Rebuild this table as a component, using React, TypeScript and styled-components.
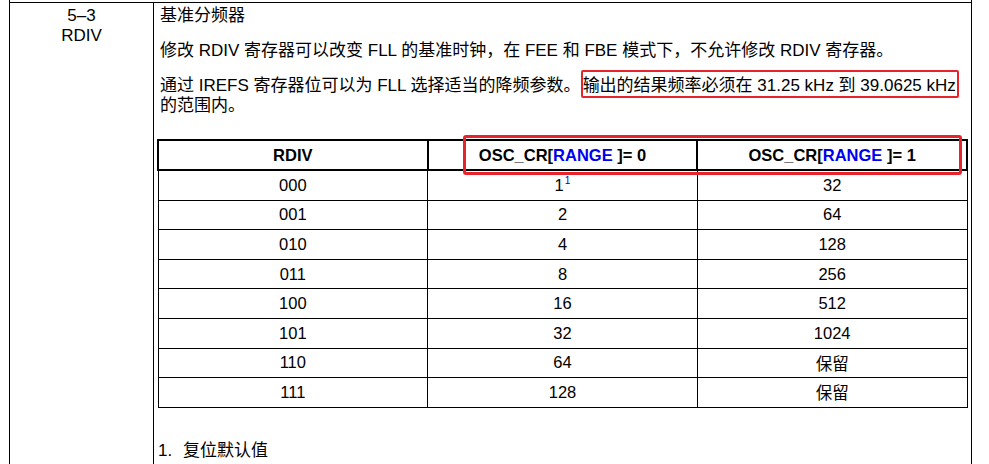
import React from "react";
import styled, { createGlobalStyle } from "styled-components";

const GlobalStyle = createGlobalStyle`
  html, body {
    margin: 0;
    padding: 0;
    background: #fff;
    overflow: hidden;
  }
  body {
    font-family: "Liberation Sans", Arial, "Noto Sans CJK SC", sans-serif;
    color: #000;
  }
`;

const Frame = styled.div`
  margin-left: 9px;
  width: 963px;
  box-sizing: border-box;
  border-left: 1px solid #000;
  border-right: 1px solid #000;
  padding-top: 2px;
  min-height: 100vh;
`;

const Row = styled.div`
  display: grid;
  grid-template-columns: 144px 1fr;
  border-top: 1px solid #000;
  min-height: 480px;
`;

const LeftCell = styled.div`
  box-sizing: border-box;
  border-right: 1px solid #000;
  text-align: center;
  padding-top: 3px;
  font-size: 17px;
  line-height: 20px;
`;

const RightCell = styled.div`
  padding: 3px 3px 0 3px;
`;

const Para = styled.p<{ $gap?: number }>`
  margin: 0 0 ${(p) => (p.$gap ?? 15)}px;
  padding-left: 3px;
  font-size: 17px;
  line-height: 20px;
`;

const Highlight = styled.span`
  white-space: nowrap;
  border: 2px solid #e8232b;
  border-radius: 2px;
  padding: 4px 1px 1px 0;
`;

const TableWrap = styled.div`
  position: relative;
  margin-top: 23px;
  width: 811px;
`;

const Table = styled.table`
  width: 811px;
  border-collapse: collapse;
  table-layout: fixed;
  font-size: 16.5px;
`;

const Th = styled.th`
  border: 2px solid #000;
  height: 28px;
  padding: 0;
  font-weight: bold;
  text-align: center;
  vertical-align: middle;
`;

const Td = styled.td`
  border: 1px solid #000;
  height: 28.6px;
  padding: 0;
  text-align: center;
  vertical-align: middle;
`;

const Blue = styled.span`
  color: #0000ee;
`;

const Sup = styled.sup`
  color: #0000ee;
  font-size: 10px;
  vertical-align: 7px;
  line-height: 0;
  margin-left: 1px;
`;

const HeaderMark = styled.div`
  position: absolute;
  left: 306px;
  top: -4px;
  width: 499px;
  height: 40px;
  box-sizing: border-box;
  border: 3px solid #e8232b;
  border-radius: 3px;
  pointer-events: none;
`;

const Footnote = styled.div`
  margin-top: 33px;
  padding-left: 1px;
  font-size: 17px;
  line-height: 20px;
  display: flex;
`;

const Marker = styled.span`
  width: 25px;
  flex: none;
`;

const rows: [string, React.ReactNode, string][] = [
  ["000", <>1<Sup>1</Sup></>, "32"],
  ["001", "2", "64"],
  ["010", "4", "128"],
  ["011", "8", "256"],
  ["100", "16", "512"],
  ["101", "32", "1024"],
  ["110", "64", "保留"],
  ["111", "128", "保留"],
];

export default function App() {
  return (
    <>
      <GlobalStyle />
      <Frame>
        <Row>
          <LeftCell>
            5–3
            <br />
            RDIV
          </LeftCell>
          <RightCell>
            <Para>基准分频器</Para>
            <Para>
              修改 RDIV 寄存器可以改变 FLL 的基准时钟，在 FEE 和 FBE 模式下，不允许修改 RDIV 寄存器。
            </Para>
            <Para $gap={0}>
              通过 IREFS 寄存器位可以为 FLL 选择适当的降频参数。
              <Highlight>输出的结果频率必须在 31.25 kHz 到 39.0625 kHz</Highlight>
              <br />
              的范围内。
            </Para>
            <TableWrap>
              <Table>
                <thead>
                  <tr>
                    <Th>RDIV</Th>
                    <Th>
                      OSC_CR[<Blue>RANGE </Blue>]= 0
                    </Th>
                    <Th>
                      OSC_CR[<Blue>RANGE </Blue>]= 1
                    </Th>
                  </tr>
                </thead>
                <tbody>
                  {rows.map(([a, b, c]) => (
                    <tr key={a}>
                      <Td>{a}</Td>
                      <Td>{b}</Td>
                      <Td>{c}</Td>
                    </tr>
                  ))}
                </tbody>
              </Table>
              <HeaderMark />
            </TableWrap>
            <Footnote>
              <Marker>1.</Marker>
              <span>复位默认值</span>
            </Footnote>
          </RightCell>
        </Row>
      </Frame>
    </>
  );
}
